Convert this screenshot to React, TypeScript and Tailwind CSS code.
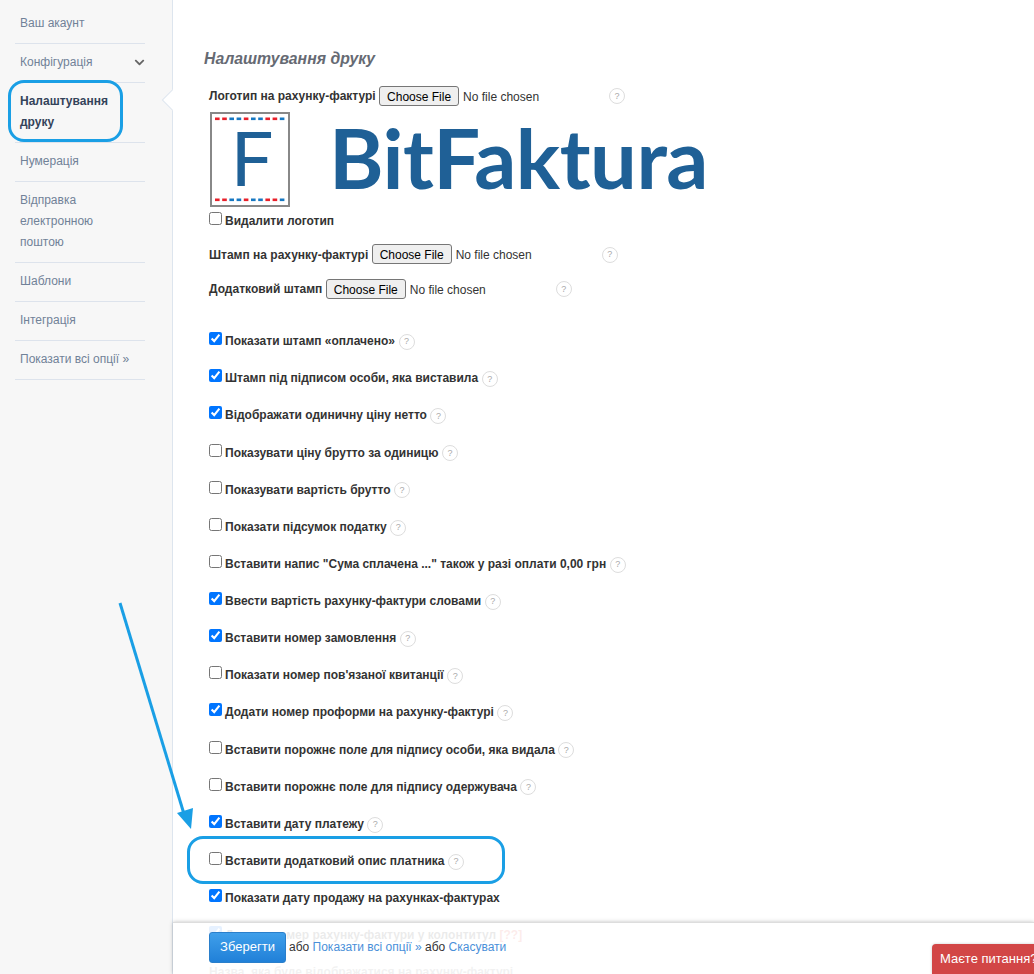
import React from "react";
import { FaChevronDown } from "react-icons/fa";

const Help = ({ file }: { file?: boolean }) => (
  <span
    className={`inline-flex h-[16px] w-[16px] items-center justify-center rounded-full border border-[#dddddd] text-[9px] font-normal leading-none text-[#aaaaaa] ${
      file ? "ml-[3px]" : "ml-[3.5px] align-middle"
    }`}
  >
    ?
  </span>
);

const rows: [string, boolean, boolean?][] = [
  ["Показати штамп «оплачено»", true],
  ["Штамп під підписом особи, яка виставила", true],
  ["Відображати одиничну ціну нетто", true],
  ["Показувати ціну брутто за одиницю", false],
  ["Показувати вартість брутто", false],
  ["Показати підсумок податку", false],
  ['Вставити напис "Сума сплачена ..." також у разі оплати 0,00 грн', false],
  ["Ввести вартість рахунку-фактури словами", true],
  ["Вставити номер замовлення", true],
  ["Показати номер пов'язаної квитанції", false],
  ["Додати номер проформи на рахунку-фактурі", true],
  ["Вставити порожнє поле для підпису особи, яка видала", false],
  ["Вставити порожнє поле для підпису одержувача", false],
  ["Вставити дату платежу", true],
  ["Вставити додатковий опис платника", false],
  ["Показати дату продажу на рахунках-фактурах", true, true],
];

const fileCls =
  "w-[227px] text-[12px] leading-[20px] text-[#333333] file:mr-[4px] file:h-[20px] file:w-[80px] file:rounded-[3px] file:border file:border-solid file:border-[#767676] file:bg-[#efefef] file:text-[12px] file:text-black";

const menu = [
  { t: ["Ваш акаунт"], cls: "pt-[13px] pb-[9px]" },
  { t: ["Конфігурація"], chevron: true, cls: "pt-[8px] pb-[9px]" },
  { t: ["Налаштування", "друку"], active: true, cls: "pt-[8px] pb-[9px]" },
  { t: ["Нумерація"], cls: "pt-[8px] pb-[9px]" },
  { t: ["Відправка", "електронною", "поштою"], cls: "pt-[8px] pb-[9px]" },
  { t: ["Шаблони"], cls: "pt-[8px] pb-[9px]" },
  { t: ["Інтеграція"], cls: "pt-[8px] pb-[9px]" },
  { t: ["Показати всі опції »"], cls: "pt-[8px] pb-[9px]" },
];

const stripeColors = ["#e8202a", "#e8202a", "#1778c2", "#1778c2", "#e8202a", "#1778c2", "#1778c2", "#e8202a", "#e8202a", "#1778c2"];

const Stripe = () => (
  <svg width="70" height="4" viewBox="0 0 70 4" className="block">
    {stripeColors.map((c, i) => (
      <rect key={i} x={i * 7.2} y="0.5" width="4.6" height="2.6" fill={c} />
    ))}
  </svg>
);

export default function App() {
  return (
    <div className="relative flex h-[974px] w-[1034px] overflow-hidden bg-white font-['Liberation_Sans',Arial,sans-serif] text-[12px] text-[#333333]">
      <aside className="relative w-[173px] shrink-0 border-r border-[#dde5ee] bg-[#f7f7f7] pl-[15px] pr-[27px]">
        {menu.map((m, i) => (
          <div
            key={i}
            className={`relative border-b border-[#dde3ec] pl-[5px] leading-[21px] ${m.cls} ${
              m.active ? "font-bold text-[#34435a]" : "text-[#718298]"
            }`}
          >
            {m.t.map((l) => (
              <div key={l}>{l}</div>
            ))}
            {m.chevron && (
              <FaChevronDown className="absolute right-0 top-[13px] h-[11px] w-[11px] text-[#666666]" />
            )}
          </div>
        ))}
        <div className="absolute right-[-1px] top-[89px] h-[22px] w-[12px] overflow-hidden">
          <div className="absolute left-[4px] top-[3px] h-[16px] w-[16px] rotate-45 border border-[#dde5ee] bg-white" />
        </div>
      </aside>

      <main className="min-w-0 flex-1 pl-[31px]">
        <h2 className="mt-[49px] text-[15.8px] font-bold italic leading-[19px] text-[#666a73]">Налаштування друку</h2>
        <div className="pl-[5px]">
          <div className="mt-[18px] flex h-[20px] items-center">
            <b className="mr-[3.4px]">Логотип на рахунку-фактурі</b>
            <input type="file" className={`${fileCls} file:pb-[2px]`} />
            <Help file />
          </div>
          <div className="mt-[5px] flex h-[96px] items-center">
            <div className="ml-[1px] flex h-[95px] w-[80px] shrink-0 flex-col items-center justify-between overflow-hidden border-2 border-[#888888] bg-white py-[3px]">
              <Stripe />
              <span className="translate-x-[2px] -translate-y-[2px] font-['Lato',sans-serif] text-[76px] font-normal leading-[70px] text-[#1f6096]">F</span>
              <Stripe />
            </div>
            <span className="ml-[39px] -translate-y-[2px] font-['Lato','Open_Sans',sans-serif] text-[83px] font-bold leading-[96px] tracking-[-0.5px] text-[#1f6096]">
              BitFaktura
            </span>
          </div>
          <div className="mt-[5px] leading-[16px]">
            <input type="checkbox" className="mr-[3px]" />
            <b>Видалити логотип</b>
          </div>
          <div className="mt-[15px] flex h-[21px] items-center">
            <b className="mr-[3.4px]">Штамп на рахунку-фактурі</b>
            <input type="file" className={fileCls} />
            <Help file />
          </div>
          <div className="mt-[14px] flex h-[20px] items-center">
            <b className="mr-[3.4px]">Додатковий штамп</b>
            <input type="file" className={`${fileCls} file:pb-[2px]`} />
            <Help file />
          </div>
          <div className="mt-[33.14px]">
            {rows.map(([t, c, noHelp]) => (
              <div key={t} className="h-[37.14px] leading-[18px]">
                <input type="checkbox" defaultChecked={c} className="mr-[3px]" />
                <b>{t}</b>
                {!noHelp && <Help />}
              </div>
            ))}
            <div className="h-[37.14px] leading-[18px]">
              <input type="checkbox" defaultChecked className="mr-[3px]" />
              <b>Додати номер рахунку-фактури у колонтитул </b>
              <b className="text-[#e0423a]">[??]</b>
            </div>
            <div className="leading-[18px]">
              <b className="text-[#777777]">Назва, яка буде відображатися на рахунку-фактурі</b>
            </div>
          </div>
        </div>
      </main>

      <div className="absolute bottom-0 left-[173px] right-0 flex h-[52px] items-center border-t border-[#dddddd] bg-white/90 pb-[3px] pl-[36px] shadow-[0_0_4px_rgba(0,0,0,0.25)]">
        <button className="h-[31px] w-[77px] rounded-[3px] border border-[#2a7fcb] bg-gradient-to-b from-[#3f9fea] to-[#2080d8] text-[13px] text-white">
          Зберегти
        </button>
        <span className="ml-[3px]">
          або <a className="text-[#4a90d9]">Показати всі опції »</a> або <a className="text-[#4a90d9]">Скасувати</a>
        </span>
      </div>

      <div className="absolute bottom-0 left-[932px] h-[30px] w-[120px] whitespace-nowrap rounded-tl-[4px] bg-[#d24646] pl-[8px] pt-[6px] text-[13px] leading-[18px] text-white shadow-[0_0_3px_rgba(0,0,0,0.2)]">
        Маєте питання?
      </div>

      <div className="pointer-events-none absolute left-[8px] top-[80px] h-[62px] w-[115px] rounded-[16px] border-[3px] border-[#1a9fe5]" />
      <div className="pointer-events-none absolute left-[187px] top-[836px] h-[48px] w-[318px] rounded-[16px] border-[3px] border-[#1a9fe5]" />
      <svg className="pointer-events-none absolute left-[110px] top-[600px]" width="90" height="232" viewBox="0 0 90 232">
        <line x1="10" y1="3" x2="74" y2="214" stroke="#1a9fe5" strokeWidth="3" />
        <polygon points="67,213 83,208 81,229" fill="#1a9fe5" />
      </svg>
    </div>
  );
}
